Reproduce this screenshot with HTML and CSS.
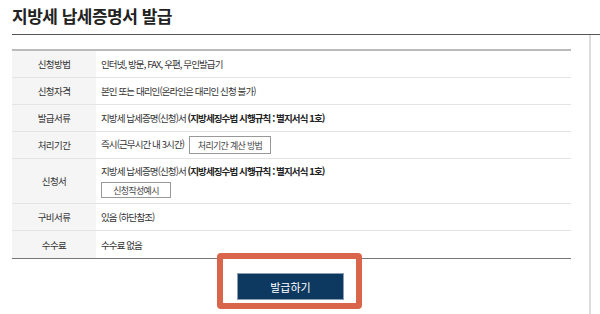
FILE: index.html
```html
<!DOCTYPE html>
<html lang="ko">
<head>
    <meta charset="UTF-8">
    <meta name="viewport" content="width=device-width, initial-scale=1.0">
    <title>지방세 납세증명서 발급</title>
    <link rel="stylesheet" href="styles.css">
</head>
<body>
    <div class="page-title">
        <h1>지방세 납세증명서 발급</h1>
    </div>

    <div class="content">
        <table class="info-table">
            <tbody>
                <tr class="row">
                    <th>신청방법</th>
                    <td>인터넷, 방문, FAX, 우편, 무인발급기</td>
                </tr>
                <tr class="row">
                    <th>신청자격</th>
                    <td>본인 또는 대리인(온라인은 대리인 신청 불가)</td>
                </tr>
                <tr class="row">
                    <th>발급서류</th>
                    <td>지방세 납세증명(신청)서 <b>(지방세징수법 시행규칙 : 별지서식 1호)</b></td>
                </tr>
                <tr class="row">
                    <th>처리기간</th>
                    <td>즉시(근무시간 내 3시간) <button class="small-button">처리기간 계산 방법</button></td>
                </tr>
                <tr class="row tall">
                    <th>신청서</th>
                    <td>
                        지방세 납세증명(신청)서 <b>(지방세징수법 시행규칙 : 별지서식 1호)</b>
                        <div class="btn-line"><button class="small-button wide">신청작성예시</button></div>
                    </td>
                </tr>
                <tr class="row">
                    <th>구비서류</th>
                    <td>있음 (하단참조)</td>
                </tr>
                <tr class="row last">
                    <th>수수료</th>
                    <td>수수료 없음</td>
                </tr>
            </tbody>
        </table>

        <div class="action-area">
            <div class="highlight-box">
                <button class="issue-button">발급하기</button>
            </div>
        </div>
    </div>
</body>
</html>
```

FILE: styles.css
```css
body {
    margin: 0;
    padding: 0 0 0 12px;
    font-family: "Noto Sans CJK KR", "Noto Sans", sans-serif;
    color: #333;
    background-color: #fff;
    overflow: hidden;
}
.page-title {
    height: 34px;
    border-bottom: 1px solid #555;
}
.page-title h1 {
    margin: 0;
    padding-top: 4px;
    font-size: 17px;
    line-height: 24px;
    font-weight: bold;
    color: #222;
    letter-spacing: -0.5px;
}
.content {
    width: 577px;
    border-right: 2px solid #ddd;
    padding-top: 14px;
    height: 265px;
}
.info-table {
    width: 559px;
    border-collapse: collapse;
    border-top: 2px solid #bbb;
    font-size: 9.5px;
    letter-spacing: -0.9px;
}
.info-table th,
.info-table td {
    border-bottom: 1px solid #e4e4e4;
    height: 26px;
    padding: 0;
    vertical-align: middle;
}
.info-table th {
    width: 84px;
    background-color: #f5f5f5;
    font-weight: normal;
    text-align: center;
    color: #333;
    letter-spacing: -0.6px;
}
.info-table td {
    padding-left: 5px;
    text-align: left;
    color: #333;
}
.info-table b {
    color: #222;
}
.row.tall th,
.row.tall td {
    height: auto;
    padding-top: 5px;
    padding-bottom: 5px;
}
.row.tall th {
    padding-top: 0;
    padding-bottom: 0;
}
.row.last th,
.row.last td {
    border-bottom: 1px solid #777;
    height: 27px;
}
.btn-line {
    margin-top: 4px;
    line-height: 0;
}
.small-button {
    font-family: inherit;
    font-size: 9px;
    letter-spacing: -0.7px;
    color: #444;
    background-color: #fff;
    border: 1px solid #999;
    height: 18px;
    padding: 0 8px;
    margin-left: 3px;
    cursor: pointer;
    vertical-align: middle;
}
.small-button.wide {
    margin-left: 0;
    width: 70px;
    height: 16px;
    padding: 0;
}
.action-area {
    width: 559px;
    display: flex;
    justify-content: center;
    margin-top: -6px;
}
.highlight-box {
    position: relative;
    background-color: #fff;
    border: 6px solid #d9654a;
    border-radius: 4px;
    padding: 14px 12px 3px 14px;
    margin-left: -4px;
}
.issue-button {
    display: block;
    width: 107px;
    height: 27px;
    background-color: #0d3960;
    color: #fff;
    border: 1px solid #8a9db3;
    font-family: inherit;
    font-size: 11px;
    cursor: pointer;
}
```
